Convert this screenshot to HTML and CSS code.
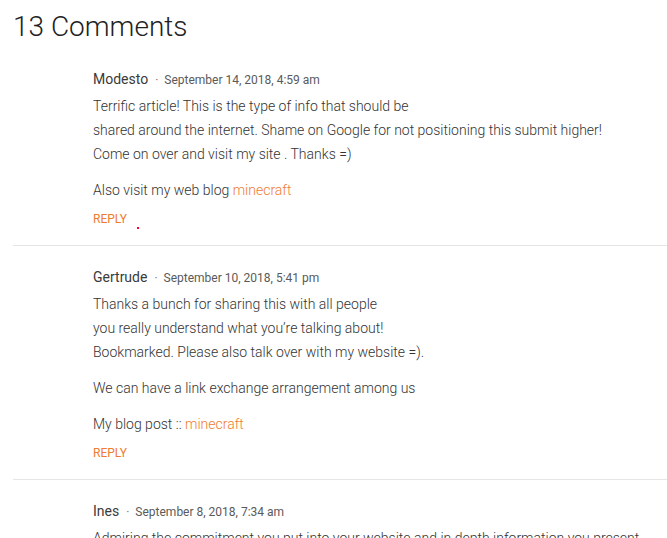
FILE: index.html
```html
<!DOCTYPE html>
<html lang="en">
<head>
    <meta charset="UTF-8">
    <meta name="viewport" content="width=device-width, initial-scale=1.0">
    <title>Comments</title>

    <link rel="stylesheet" href="styles.css">

</head>
<body>
    <div class="comments">
        <h2 class="comments-title">13 Comments</h2>

        <div class="comment">
            <div class="comment-meta">
                <span class="comment-author">Modesto</span>
                <span class="comment-sep">&middot;</span>
                <span class="comment-date">September 14, 2018, 4:59 am</span>
            </div>
            <p>Terrific article! This is the type of info that should be<br>
            shared around the internet. Shame on Google for not positioning this submit higher!<br>
            Come on over and visit my site . Thanks =)</p>
            <p>Also visit my web blog <a href="#">minecraft</a></p>
            <div class="comment-reply"><a href="#">REPLY</a><span class="dot"></span></div>
        </div>

        <div class="comment">
            <div class="comment-meta">
                <span class="comment-author">Gertrude</span>
                <span class="comment-sep">&middot;</span>
                <span class="comment-date">September 10, 2018, 5:41 pm</span>
            </div>
            <p>Thanks a bunch for sharing this with all people<br>
            you really understand what you&rsquo;re talking about!<br>
            Bookmarked. Please also talk over with my website =).</p>
            <p>We can have a link exchange arrangement among us</p>
            <p>My blog post :: <a href="#">minecraft</a></p>
            <div class="comment-reply"><a href="#">REPLY</a></div>
        </div>

        <div class="comment">
            <div class="comment-meta">
                <span class="comment-author">Ines</span>
                <span class="comment-sep">&middot;</span>
                <span class="comment-date">September 8, 2018, 7:34 am</span>
            </div>
            <p>Admiring the commitment you put into your website and in depth information you present.</p>
        </div>
    </div>
</body>
</html>
```

FILE: styles.css
```css
body {
    margin: 0;
    background: #ffffff;
    font-family: Roboto, "Liberation Sans", sans-serif;
    color: #333333;
    overflow: hidden;
}

.comments {
    padding-left: 13px;
}

.comments-title {
    margin: 10px 0 4px;
    font-size: 28px;
    line-height: 34px;
    font-weight: 300;
    color: #222222;
}

.comment {
    padding: 18px 0 16px 80px;
    border-bottom: 1px solid #e5e5e5;
}

.comment-meta {
    display: flex;
    align-items: baseline;
    line-height: 26px;
    margin-bottom: 1px;
}

.comment-author {
    font-size: 14px;
    font-weight: 400;
    color: #3a3a3a;
}

.comment-sep {
    margin: 0 6px 0 7px;
    font-size: 12px;
    color: #777777;
}

.comment-date {
    font-size: 12px;
    color: #5a5a5a;
}

.comment p {
    margin: 0 0 12px;
    font-size: 14px;
    line-height: 24px;
    font-weight: 300;
    white-space: nowrap;
}

.comment p:last-of-type {
    margin-bottom: 0;
}

.comment a {
    color: #f07c30;
    text-decoration: none;
}

.comment-reply {
    margin-top: 7px;
    font-size: 12px;
    line-height: 20px;
}

.dot {
    display: inline-block;
    width: 2px;
    height: 2px;
    margin-left: 10px;
    background: #ff0033;
    vertical-align: -6px;
}
```
